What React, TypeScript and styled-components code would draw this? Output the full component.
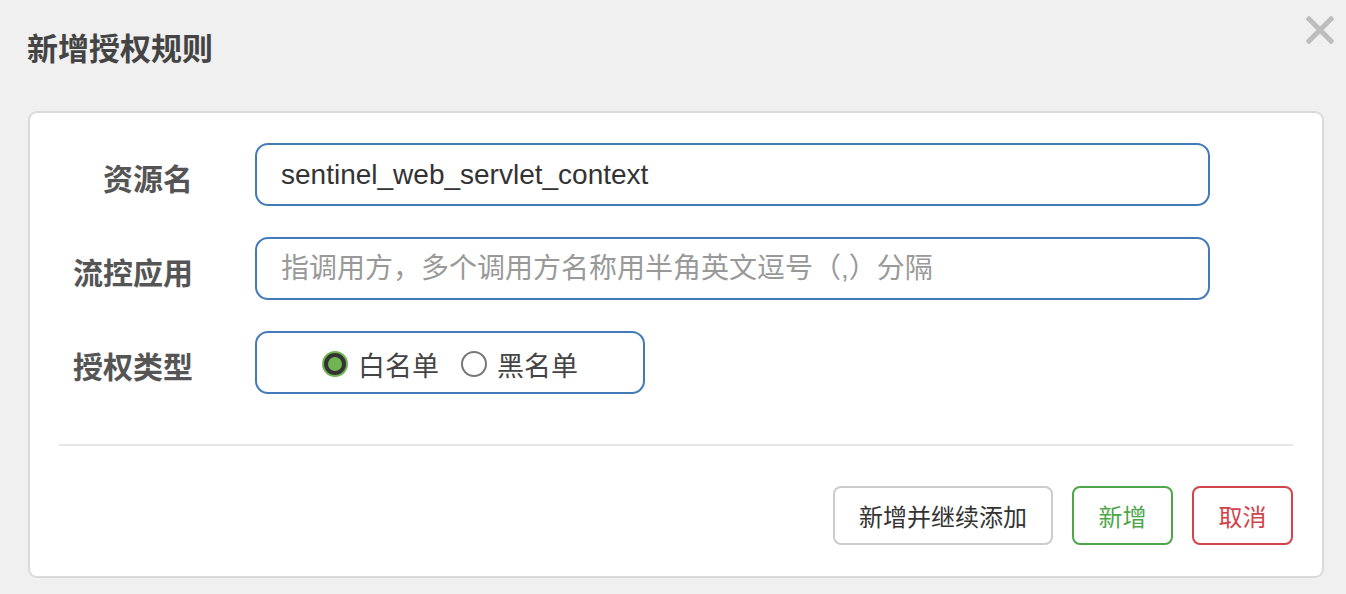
import React from "react";
import styled, { createGlobalStyle } from "styled-components";

const GlobalStyle = createGlobalStyle`
  html, body {
    margin: 0;
    padding: 0;
    background: #f0f0f0;
  }
  body {
    font-family: "Liberation Sans", "Noto Sans CJK SC", sans-serif;
    color: #333;
  }
  * { box-sizing: border-box; }
`;

const Page = styled.div`
  width: 1346px;
  height: 594px;
  display: flex;
  flex-direction: column;
  background: #f0f0f0;
`;

const Header = styled.div`
  height: 96px;
  flex-shrink: 0;
  display: flex;
  justify-content: space-between;
  align-items: flex-start;
  padding: 0 12px 0 27px;
`;

const Title = styled.h3`
  margin: 0;
  line-height: 94px;
  font-size: 31px;
  font-weight: 700;
  color: #444;
  font-family: "Noto Sans CJK SC", sans-serif;
`;

const CloseButton = styled.button`
  margin-top: 16px;
  width: 28px;
  height: 28px;
  padding: 0;
  border: none;
  background: transparent;
  display: flex;
  align-items: center;
  justify-content: center;
  cursor: pointer;
`;

const Card = styled.div`
  margin: 15px 22px 0 28px;
  height: 467px;
  flex-shrink: 0;
  background: #fff;
  border: 2px solid #dadada;
  border-radius: 9px;
  padding: 30px 29px 30px 29px;
  display: flex;
  flex-direction: column;
`;

const Form = styled.div`
  display: grid;
  grid-template-columns: 134px 955px;
  grid-auto-rows: 63px;
  column-gap: 62px;
  row-gap: 31px;
  align-items: start;
  flex-shrink: 0;
`;

const Label = styled.label`
  text-align: right;
  font-family: "Noto Sans CJK SC", sans-serif;
  font-size: 30px;
  font-weight: 700;
  color: #555;
  height: 63px;
  line-height: 59px;
  padding-top: 5px;
`;

const Input = styled.input`
  width: 955px;
  height: 63px;
  border: 2px solid #437ab8;
  border-radius: 13px;
  padding: 0 24px;
  font-family: "Liberation Sans", "Noto Sans CJK SC", sans-serif;
  font-size: 28px;
  color: #333;
  outline: none;
  background: #fff;
  &::placeholder {
    color: #999;
  }
`;

const RadioBox = styled.div`
  width: 390px;
  height: 63px;
  border: 2px solid #437ab8;
  border-radius: 13px;
  display: flex;
  align-items: center;
  justify-content: center;
  gap: 22px;
  padding-top: 3px;
`;

const RadioOption = styled.label`
  display: flex;
  align-items: center;
  gap: 10px;
  font-family: "Noto Sans CJK SC", sans-serif;
  font-size: 27px;
  color: #444;
  cursor: pointer;
`;

const RadioCircle = styled.span<{ $checked?: boolean }>`
  width: 26px;
  height: 26px;
  border-radius: 50%;
  display: inline-block;
  flex-shrink: 0;
  ${(p) =>
    p.$checked
      ? `
    background: #6fb552;
    border: 4px solid #333;
    box-shadow: 0 0 0 2px #6fb552;
    width: 22px;
    height: 22px;
    margin: 0 2px;
  `
      : `
    background: #fff;
    border: 2px solid #777;
  `}
`;

const Divider = styled.div`
  margin-top: 50px;
  height: 2px;
  flex-shrink: 0;
  background: #e5e5e5;
`;

const Footer = styled.div`
  margin-top: 40px;
  display: flex;
  justify-content: flex-end;
  gap: 19px;
  flex-shrink: 0;
`;

const Button = styled.button<{ $variant?: "default" | "success" | "danger"; $width: number }>`
  height: 59px;
  width: ${(p) => p.$width}px;
  border-radius: 8px;
  background: #fff;
  font-family: "Noto Sans CJK SC", sans-serif;
  font-size: 24px;
  cursor: pointer;
  border: 2px solid
    ${(p) =>
      p.$variant === "success" ? "#4ea64a" : p.$variant === "danger" ? "#d3434a" : "#cccccc"};
  color: ${(p) =>
    p.$variant === "success" ? "#4ea64a" : p.$variant === "danger" ? "#d3434a" : "#333"};
`;

export default function App() {
  return (
    <Page>
      <GlobalStyle />
      <Header>
        <Title>新增授权规则</Title>
        <CloseButton aria-label="close">
          <svg width="28" height="28" viewBox="0 0 28 28">
            <path d="M3 3 L25 25 M25 3 L3 25" stroke="#bdbdbd" strokeWidth="5" strokeLinecap="square" />
          </svg>
        </CloseButton>
      </Header>
      <Card>
        <Form>
          <Label>资源名</Label>
          <Input defaultValue="sentinel_web_servlet_context" />
          <Label>流控应用</Label>
          <Input placeholder="指调用方，多个调用方名称用半角英文逗号（,）分隔" />
          <Label>授权类型</Label>
          <RadioBox>
            <RadioOption>
              <RadioCircle $checked />
              白名单
            </RadioOption>
            <RadioOption>
              <RadioCircle />
              黑名单
            </RadioOption>
          </RadioBox>
        </Form>
        <Divider />
        <Footer>
          <Button $variant="default" $width={220}>新增并继续添加</Button>
          <Button $variant="success" $width={101}>新增</Button>
          <Button $variant="danger" $width={101}>取消</Button>
        </Footer>
      </Card>
    </Page>
  );
}
